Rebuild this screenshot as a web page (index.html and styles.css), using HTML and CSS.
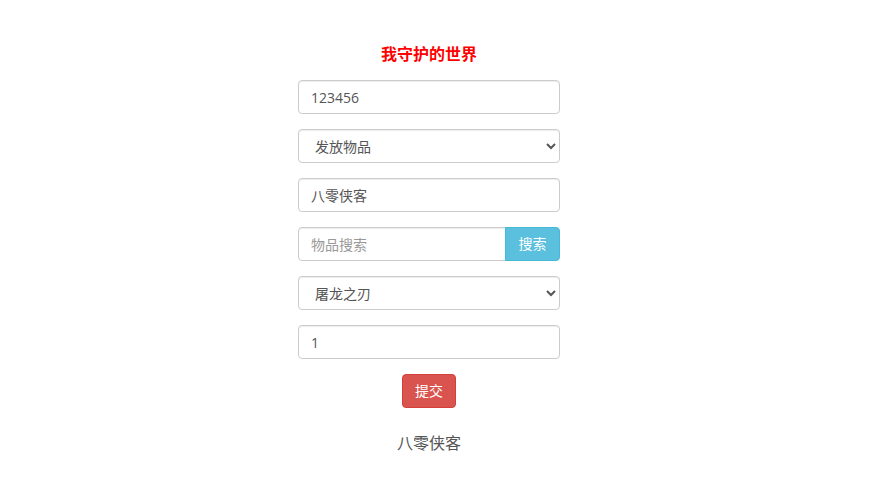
FILE: index.html
```html
<!DOCTYPE html>
<html lang="zh-CN">
<head>
<meta charset="utf-8">
<title>我守护的世界</title>
<link rel="stylesheet" href="styles.css">
</head>
<body>
<div class="page">
  <form class="panel">
    <h3 class="title">我守护的世界</h3>
    <div class="form-group">
      <input class="form-control" type="text" value="123456">
    </div>
    <div class="form-group">
      <select class="form-control select">
        <option>发放物品</option>
      </select>
    </div>
    <div class="form-group">
      <input class="form-control" type="text" value="八零侠客">
    </div>
    <div class="form-group input-group">
      <input class="form-control grow" type="text" placeholder="物品搜索">
      <button class="btn btn-info" type="button">搜索</button>
    </div>
    <div class="form-group">
      <select class="form-control select">
        <option>屠龙之刃</option>
      </select>
    </div>
    <div class="form-group">
      <input class="form-control" type="text" value="1">
    </div>
    <div class="actions">
      <button class="btn btn-danger" type="button">提交</button>
    </div>
    <p class="footer-name">八零侠客</p>
  </form>
</div>
</body>
</html>
```

FILE: styles.css
```css
* { box-sizing: border-box; }
html, body {
  margin: 0;
  padding: 0;
  background: #fff;
}
body {
  font-family: "Open Sans", "Noto Sans CJK SC", sans-serif;
  font-size: 14px;
  line-height: 1.42857;
  color: #333;
}
.page {
  display: flex;
  justify-content: center;
  padding: 43px 18px 0 0;
}
.panel {
  width: 262px;
  display: flex;
  flex-direction: column;
}
.title {
  margin: 0 0 14px;
  font-size: 16px;
  line-height: 23px;
  font-weight: bold;
  color: #ff0000;
  text-align: center;
}
.form-group {
  margin-bottom: 15px;
}
.form-control {
  display: block;
  width: 100%;
  height: 34px;
  padding: 6px 12px;
  font-family: "Open Sans", "Noto Sans CJK SC", sans-serif;
  font-size: 14px;
  line-height: 1.42857;
  color: #555;
  background: #fff;
  border: 1px solid #ccc;
  border-radius: 4px;
  box-shadow: inset 0 1px 1px rgba(0,0,0,.075);
  outline: none;
}
.form-control::placeholder { color: #999; }
.select {
  padding: 6px 8px 6px 12px;
}
.input-group {
  display: flex;
}
.input-group .grow {
  flex: 1;
  min-width: 0;
  border-radius: 4px 0 0 4px;
}
.btn {
  height: 34px;
  padding: 6px 12px;
  font-family: "Open Sans", "Noto Sans CJK SC", sans-serif;
  font-size: 14px;
  line-height: 1.42857;
  color: #fff;
  border: 1px solid transparent;
  border-radius: 4px;
  cursor: pointer;
}
.btn-info {
  background: #5bc0de;
  border-color: #46b8da;
  border-radius: 0 4px 4px 0;
  margin-left: -1px;
  width: 55px;
}
.actions {
  display: flex;
  justify-content: center;
}
.btn-danger {
  background: #d9534f;
  border-color: #d43f3a;
  width: 54px;
}
.footer-name {
  margin: 24px 0 0;
  text-align: center;
  font-size: 16px;
  color: #555;
}
```
